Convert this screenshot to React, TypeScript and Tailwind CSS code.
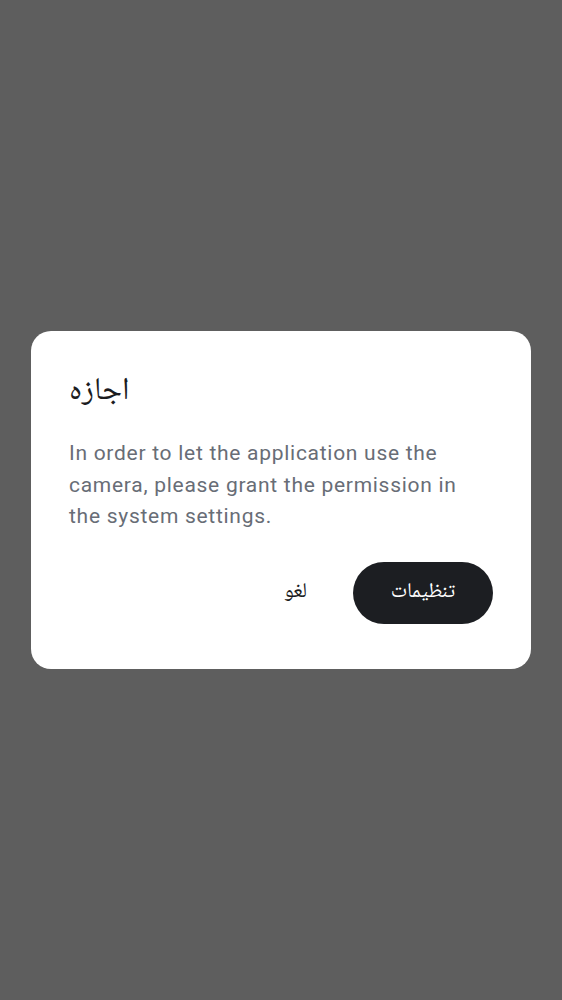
export default function App() {
  return (
    <div className="flex h-[1000px] w-full items-center justify-center bg-[#5e5e5e] px-[31px]">
      <div className="w-full rounded-[20px] bg-white px-[38px] pt-[40px] pb-[45px]">
        <h2 className="text-[31.5px] leading-[42px] text-[#1b1c1e] font-['Noto_Naskh_Arabic','Vazirmatn',sans-serif]">
          اجازه
        </h2>
        <p className="mt-[25px] pr-[4px] text-[21px] leading-[31.5px] tracking-[0.72px] text-[#686d76] font-['Roboto',sans-serif]">
          In order to let the application use the camera, please grant the permission in the system settings.
        </p>
        <div className="mt-[29px] flex items-center justify-end gap-[46px] font-['Noto_Naskh_Arabic','Vazirmatn',sans-serif]">
          <button className="text-[21px] text-[#1b1c1e]">لغو</button>
          <button className="h-[62px] w-[140px] rounded-full bg-[#1c1e22] text-[21px] text-white">تنظیمات</button>
        </div>
      </div>
    </div>
  );
}
